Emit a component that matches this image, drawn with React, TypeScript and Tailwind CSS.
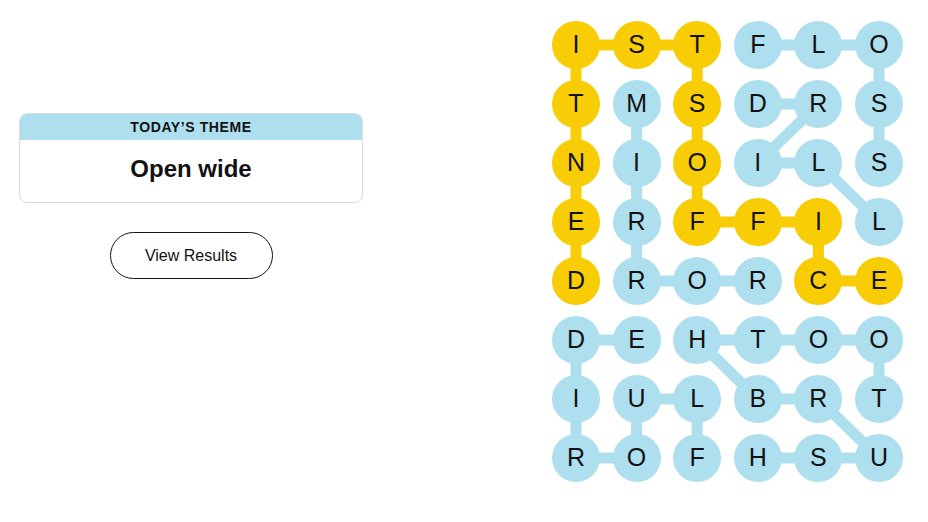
import React from "react";

const ROWS = ["ISTFLO", "TMSDRS", "NIOILS", "ERFFIL", "DRORCE", "DEHTOO", "IULBRT", "ROFHSU"];

const YELLOW = "#f8cd05";
const BLUE = "#aedfee";

type P = [number, number];
const paths: { color: string; pts: P[] }[] = [
  { color: YELLOW, pts: [[4,0],[3,0],[2,0],[1,0],[0,0],[0,1],[0,2],[1,2],[2,2],[3,2],[3,3],[3,4],[4,4],[4,5]] },
  { color: BLUE, pts: [[1,1],[2,1],[3,1],[4,1],[4,2],[4,3]] },
  { color: BLUE, pts: [[0,3],[0,4],[0,5],[1,5],[2,5]] },
  { color: BLUE, pts: [[1,3],[1,4],[2,3],[2,4],[3,5]] },
  { color: BLUE, pts: [[7,2],[6,2],[6,1],[7,1],[7,0],[6,0],[5,0],[5,1]] },
  { color: BLUE, pts: [[6,5],[5,5],[5,4],[5,3],[5,2],[6,3],[6,4],[7,5],[7,4],[7,3]] },
];

const yellowSet = new Set(paths[0].pts.map(([r, c]) => `${r}-${c}`));

const cx = (c: number) => 24 + c * 60.6;
const cy = (r: number) => 24 + r * 59;

export default function App() {
  return (
    <div className="w-[928px] h-[522px] bg-white flex" style={{ fontFamily: '"Liberation Sans", Arial, sans-serif' }}>
      <div className="ml-[19px] w-[344px] pt-[113px] flex flex-col items-center">
        <div className="w-full rounded-[8px] border border-[#dcdcdc] overflow-hidden">
          <div className="h-[26px] bg-[#aedfee] flex items-center justify-center text-[14px] font-bold tracking-[0.6px] text-[#121212] uppercase">
            Today’s Theme
          </div>
          <div className="h-[62px] flex items-center justify-center text-[24px] font-bold text-[#121212] pb-[4px]">
            Open wide
          </div>
        </div>
        <button className="mt-[29px] w-[163px] h-[47px] rounded-full border border-[#121212] text-[16px] text-[#121212] bg-white">
          View Results
        </button>
      </div>
      <div className="ml-[189px] pt-[21px]">
        <div className="relative grid grid-cols-[repeat(6,48px)] gap-x-[12.6px] gap-y-[11px]">
          <svg className="absolute inset-0" width="352" height="462">
            {paths.map((p, i) => (
              <polyline
                key={i}
                points={p.pts.map(([r, c]) => `${cx(c)},${cy(r)}`).join(" ")}
                fill="none"
                stroke={p.color}
                strokeWidth={11}
                strokeLinejoin="round"
              />
            ))}
          </svg>
          {ROWS.flatMap((row, r) =>
            row.split("").map((ch, c) => (
              <div
                key={`${r}-${c}`}
                className={`relative z-10 w-[48px] h-[48px] rounded-full flex items-center justify-center text-[25px] text-[#121212] ${
                  yellowSet.has(`${r}-${c}`) ? "bg-[#f8cd05]" : "bg-[#aedfee]"
                }`}
              >
                {ch}
              </div>
            ))
          )}
        </div>
      </div>
    </div>
  );
}
